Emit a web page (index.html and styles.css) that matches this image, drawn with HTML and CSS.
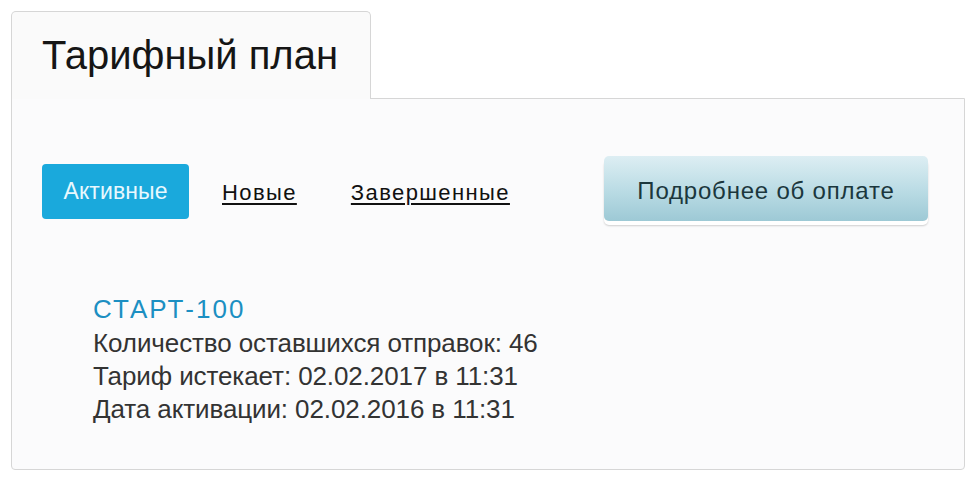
FILE: index.html
```html
<!DOCTYPE html>
<html lang="ru">
<head>
<meta charset="utf-8">
<title>Тарифный план</title>
<link rel="stylesheet" href="styles.css">
</head>
<body>
<div class="card">
  <div class="tab"><h1 class="tab-title">Тарифный план</h1></div>
  <div class="panel">
    <div class="toolbar">
      <a class="filter filter-active">Активные</a>
      <a class="filter filter-link filter-new">Новые</a>
      <a class="filter filter-link filter-done">Завершенные</a>
      <a class="pay-btn">Подробнее об оплате</a>
    </div>
    <div class="plan">
      <div class="plan-name">СТАРТ-100</div>
      <div class="plan-line">Количество оставшихся отправок: 46</div>
      <div class="plan-line">Тариф истекает: 02.02.2017 в 11:31</div>
      <div class="plan-line">Дата активации: 02.02.2016 в 11:31</div>
    </div>
  </div>
</div>
</body>
</html>
```
FILE: styles.css
```css
html, body {
  margin: 0;
  padding: 0;
  background: #ffffff;
}
body {
  font-family: "Liberation Sans", Arial, sans-serif;
  color: #222;
}
.card {
  margin: 11px 0 0 11px;
  width: 954px;
}
.tab {
  position: relative;
  z-index: 1;
  width: 360px;
  height: 88px;
  margin-bottom: -1px;
  border: 1px solid #d6d6d6;
  border-bottom: none;
  border-radius: 5px 5px 0 0;
  background: #fafafa;
  box-sizing: border-box;
}
.tab-title {
  margin: 0;
  padding: 20px 0 0 30px;
  font-size: 40px;
  font-weight: normal;
  line-height: 46px;
  color: #151515;
}
.panel {
  height: 372px;
  box-sizing: border-box;
  border: 1px solid #d6d6d6;
  border-radius: 0 0 4px 4px;
  background: #fbfbfc;
  padding: 57px 36px 0 30px;
}
.toolbar {
  display: flex;
  align-items: center;
}
.filter {
  font-size: 22px;
  text-decoration: none;
  color: #111;
}
.filter-active {
  display: inline-flex;
  align-items: center;
  justify-content: center;
  width: 147px;
  height: 55px;
  margin-top: 6px;
  border-radius: 4px;
  background: #1aa9dc;
  color: #e8f8fe;
  letter-spacing: 0.1px;
  font-size: 23px;
}
.filter-link {
  margin-top: 8px;
  text-decoration: underline;
  text-underline-offset: 3px;
  text-decoration-thickness: 2px;
  letter-spacing: 1.4px;
}
.filter-new {
  margin-left: 33px;
}
.filter-done {
  margin-left: 54px;
}
.pay-btn {
  margin-left: auto;
  display: inline-flex;
  align-items: center;
  justify-content: center;
  width: 324px;
  height: 65px;
  padding-top: 4px;
  box-sizing: border-box;
  border-radius: 5px;
  background: linear-gradient(#ddeef3, #b9dbe4 55%, #9dc9d5);
  color: #1b373d;
  font-size: 24px;
  letter-spacing: 0.8px;
  box-shadow: 0 4px 0 #ffffff, 0 5px 2px rgba(0, 0, 0, 0.18);
}
.plan {
  padding: 71px 0 0 51px;
}
.plan-name {
  font-size: 26px;
  line-height: 34px;
  color: #1c8fc2;
  letter-spacing: 2px;
  margin-bottom: 1px;
}
.plan-line {
  font-size: 26px;
  line-height: 33px;
  color: #333333;
  letter-spacing: -0.1px;
}
```
